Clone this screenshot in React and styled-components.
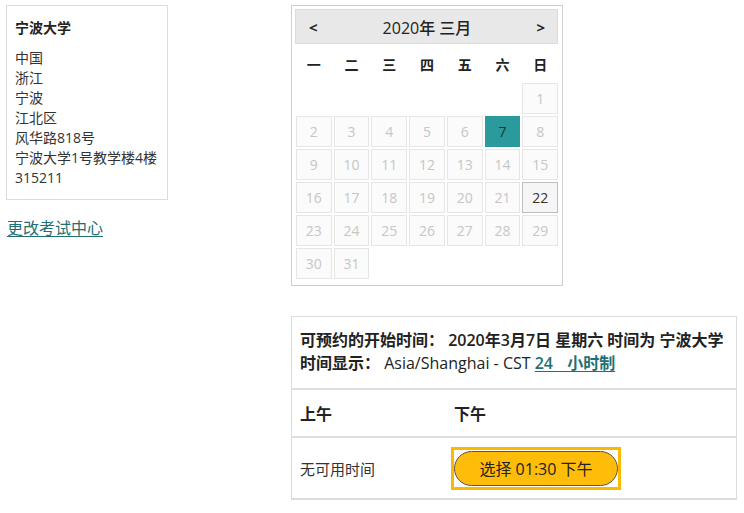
import React from 'react'
import styled, { createGlobalStyle } from 'styled-components'

const Global = createGlobalStyle`
    html, body {
        margin: 0;
        padding: 0;
        background: #fff;
    }
    body {
        font-family: "Open Sans", "Noto Sans CJK SC", "Noto Sans", sans-serif;
        color: #222;
    }
`

const Page = styled.div`
    display: flex;
    align-items: flex-start;
    padding: 5px 0 0 6px;
`

const LeftCol = styled.div`
    width: 162px;
    flex-shrink: 0;
`

const AddressBox = styled.div`
    border: 1px solid #dcdcdc;
    padding: 12px 8px 11px 8px;
    font-size: 14px;
    line-height: 20px;
    color: #333;
    white-space: nowrap;
    .name {
        font-weight: 600;
        color: #222;
        margin-bottom: 10px;
    }
`

const ChangeLink = styled.a`
    display: inline-block;
    margin-top: 18px;
    margin-left: 1px;
    font-size: 16px;
    line-height: 20px;
    color: #226f73;
    text-decoration: underline;
    text-underline-offset: 2px;
`

const RightCol = styled.div`
    margin-left: 123px;
    display: flex;
    flex-direction: column;
`

const Calendar = styled.div`
    width: 263px;
    border: 1px solid #cfcfcf;
    padding: 3px 4px 6px 3px;
`

const CalHeader = styled.div`
    height: 33px;
    background: #e8e8e8;
    border: 1px solid #dcdcdc;
    display: flex;
    align-items: center;
    justify-content: space-between;
    padding: 0 12px 0 13px;
    font-size: 16px;
    font-weight: 500;
    color: #222;
    .nav {
        font-weight: 700;
        font-size: 15px;
    }
`

const CalGrid = styled.div`
    display: grid;
    grid-template-columns: repeat(7, 1fr);
    grid-template-rows: 35px;
    grid-auto-rows: 31px;
    gap: 2px;
    margin-top: 2px;
    padding: 0 0 0 1px;
`

const WeekDay = styled.div`
    display: flex;
    align-items: center;
    justify-content: center;
    font-size: 14px;
    font-weight: 600;
    color: #222;
`

const Day = styled.div`
    box-sizing: border-box;
    display: flex;
    align-items: center;
    justify-content: center;
    font-size: 14px;
    border: 1px solid ${p => p.$selected ? '#2b9a9c' : p.$today ? '#bdbdbd' : '#e6e6e6'};
    background: ${p => p.$selected ? '#2b9a9c' : p.$today ? '#f5f5f5' : '#fbfbfb'};
    color: ${p => p.$selected ? '#1d3536' : p.$today ? '#333' : '#c6c6c6'};
`

const Slots = styled.div`
    margin-top: 30px;
    width: 444px;
    border: 1px solid #dcdcdc;
    border-bottom-width: 2px;
`

const SlotsInfo = styled.div`
    padding: 12px 8px 13px 8px;
    font-size: 16px;
    font-weight: 600;
    line-height: 23px;
    color: #222;
    white-space: nowrap;
    border-bottom: 2px solid #dedede;
    .latin {
        font-weight: 500;
    }
    a {
        color: #226f73;
        text-decoration: underline;
        text-underline-offset: 2px;
        word-spacing: 10px;
    }
`

const SlotRow = styled.div`
    display: grid;
    grid-template-columns: 159px 1fr;
    align-items: center;
    height: ${p => p.$height}px;
    border-bottom: ${p => p.$last ? 'none' : '2px solid #dedede'};
    font-size: ${p => p.$head ? '16px' : '15px'};
    font-weight: ${p => p.$head ? 700 : 400};
    color: ${p => p.$head ? '#222' : '#333'};
    > div:first-child {
        padding-left: 8px;
    }
    > div:last-child {
        padding-left: ${p => p.$head ? '3px' : '0'};
    }
`

const FocusRing = styled.span`
    display: inline-flex;
    border: 3px solid #fbb800;
    padding: 1px 0;
`

const PickButton = styled.button`
    width: 164px;
    height: 35px;
    border-radius: 18px;
    border: 1px solid #555;
    background: #ffbd0a;
    font-family: inherit;
    font-size: 16px;
    color: #222;
    cursor: pointer;
`

const weekDays = ['一', '二', '三', '四', '五', '六', '日']

export default function App() {
    let days = []
    for (let d = 1; d <= 31; d++) days.push(d)
    return (
        <>
            <Global />
            <Page>
                <LeftCol>
                    <AddressBox>
                        <div className="name">宁波大学</div>
                        <div>中国</div>
                        <div>浙江</div>
                        <div>宁波</div>
                        <div>江北区</div>
                        <div>风华路818号</div>
                        <div>宁波大学1号教学楼4楼</div>
                        <div>315211</div>
                    </AddressBox>
                    <ChangeLink href="#">更改考试中心</ChangeLink>
                </LeftCol>
                <RightCol>
                    <Calendar>
                        <CalHeader>
                            <span className="nav">&lt;</span>
                            <span>2020年 三月</span>
                            <span className="nav">&gt;</span>
                        </CalHeader>
                        <CalGrid>
                            {weekDays.map(w => <WeekDay key={w}>{w}</WeekDay>)}
                            {days.map(d => (
                                <Day
                                    key={d}
                                    style={d === 1 ? { gridColumn: 7 } : undefined}
                                    $selected={d === 7}
                                    $today={d === 22}
                                >{d}</Day>
                            ))}
                        </CalGrid>
                    </Calendar>
                    <Slots>
                        <SlotsInfo>
                            可预约的开始时间： 2020年3月7日 星期六 时间为 宁波大学<br />
                            时间显示： <span className="latin">Asia/Shanghai - CST</span> <a href="#">24 小时制</a>
                        </SlotsInfo>
                        <SlotRow $head $height={46}>
                            <div>上午</div>
                            <div>下午</div>
                        </SlotRow>
                        <SlotRow $last $height={60}>
                            <div>无可用时间</div>
                            <div>
                                <FocusRing>
                                    <PickButton>选择 01:30 下午</PickButton>
                                </FocusRing>
                            </div>
                        </SlotRow>
                    </Slots>
                </RightCol>
            </Page>
        </>
    )
}
